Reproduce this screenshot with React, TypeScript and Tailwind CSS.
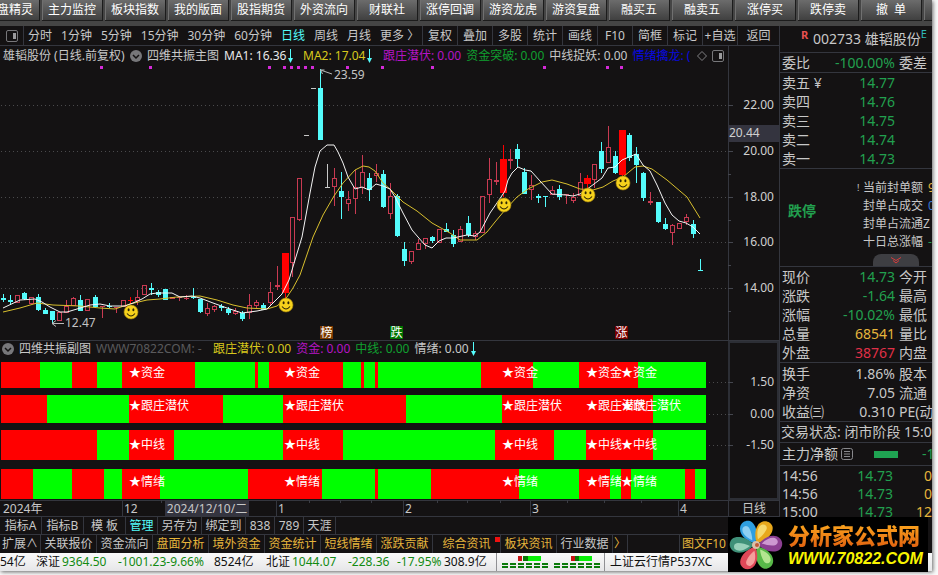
import React from "react";

type Kind = "u" | "d" | "s" | "g";
type Candle = [number, Kind, number, number, number, number];

// x, kind (u hollow up, d filled down, s signal, g grey), body top, body bottom, wick top, wick bottom
const candles: Candle[] = [
  [3, "d", 298, 300, 294, 302], [10, "d", 300, 302, 295, 304], [17, "u", 295, 303, 295, 303],
  [24, "d", 293, 299, 292, 300], [31, "u", 297, 304, 297, 304], [38, "d", 297, 310, 294, 311],
  [45, "d", 310, 314, 308, 314], [52, "d", 311, 320, 311, 323], [59, "u", 312, 321, 312, 321],
  [66, "u", 306, 313, 300, 313], [73, "u", 298, 306, 297, 306], [80, "d", 300, 311, 295, 311],
  [87, "u", 299, 311, 299, 311], [95, "d", 297, 307, 295, 308], [102, "u", 306, 307, 306, 318],
  [109, "d", 306, 307, 303, 308], [116, "u", 307, 308, 307, 313], [123, "u", 300, 307, 300, 307],
  [130, "s", 300, 301, 297, 304], [137, "u", 297, 301, 290, 305], [144, "u", 285, 295, 285, 295],
  [151, "d", 288, 290, 283, 295], [158, "d", 292, 295, 290, 297], [165, "d", 289, 300, 289, 300],
  [172, "u", 297, 299, 297, 299], [179, "u", 297, 298, 297, 301], [186, "u", 298, 299, 295, 300],
  [193, "d", 297, 298, 288, 299], [200, "d", 299, 312, 299, 313], [207, "u", 308, 314, 303, 316],
  [214, "u", 306, 310, 305, 312], [221, "d", 306, 308, 304, 311], [228, "d", 309, 313, 307, 315],
  [235, "u", 311, 314, 308, 315], [242, "d", 313, 319, 311, 321], [249, "u", 305, 313, 294, 319],
  [256, "u", 302, 306, 300, 308], [263, "d", 305, 310, 303, 310], [270, "u", 292, 303, 282, 305],
  [277, "u", 285, 287, 266, 290], [285, "s", 253, 293, 253, 300], [292, "u", 217, 263, 217, 277],
  [299, "u", 178, 220, 178, 221], [306, "g", 135, 136, 135, 136], [313, "g", 88, 89, 88, 89],
  [320, "d", 88, 140, 69, 140], [327, "g", 187, 188, 164, 188], [334, "u", 178, 187, 168, 206],
  [341, "d", 191, 197, 172, 219], [348, "u", 199, 204, 191, 211], [355, "u", 187, 199, 170, 214],
  [362, "u", 172, 188, 155, 194], [369, "d", 178, 190, 173, 201], [376, "u", 173, 176, 164, 182],
  [383, "d", 174, 207, 170, 208], [390, "u", 196, 214, 183, 219], [397, "d", 196, 236, 194, 237],
  [404, "d", 249, 261, 242, 266], [411, "u", 251, 262, 251, 264], [418, "u", 243, 250, 239, 250],
  [425, "u", 238, 244, 238, 249], [432, "d", 237, 241, 236, 243], [439, "u", 229, 243, 229, 243],
  [446, "d", 229, 232, 223, 232], [453, "d", 235, 244, 230, 247], [460, "u", 229, 242, 226, 242],
  [468, "d", 223, 235, 216, 237], [475, "u", 233, 237, 231, 240], [482, "u", 196, 233, 196, 233],
  [489, "u", 179, 195, 158, 203], [496, "u", 180, 182, 162, 185], [503, "s", 159, 193, 145, 197],
  [510, "u", 159, 161, 149, 169], [517, "d", 149, 159, 144, 168], [524, "d", 172, 194, 168, 194],
  [531, "u", 185, 190, 175, 200], [538, "d", 196, 198, 194, 203], [545, "d", 196, 197, 196, 207],
  [552, "u", 190, 195, 186, 195], [559, "d", 189, 197, 185, 200], [566, "u", 194, 195, 194, 204],
  [573, "u", 197, 201, 193, 203], [580, "u", 182, 196, 173, 196], [587, "s", 178, 184, 175, 188],
  [594, "u", 164, 180, 164, 188], [601, "d", 151, 169, 142, 173], [608, "u", 147, 163, 126, 163],
  [615, "d", 156, 173, 151, 174], [622, "s", 130, 175, 130, 177], [629, "d", 135, 158, 133, 161],
  [636, "d", 154, 165, 147, 183], [643, "d", 173, 198, 172, 201], [650, "u", 201, 203, 192, 205],
  [658, "d", 202, 222, 202, 223], [665, "d", 224, 229, 218, 230], [672, "u", 225, 233, 224, 245],
  [679, "u", 223, 229, 223, 229], [686, "u", 217, 222, 214, 225], [693, "d", 224, 234, 220, 238],
  [700, "d", 270, 271, 259, 271],
];

const maWhite =
  "3,308 20,300 35,299 42,302 50,307 60,312 67,312 77,309 90,305 100,304 110,306 125,306 133,303 142,299 150,294 157,293 172,293 180,297 192,296 200,298 213,303 227,308 242,313 257,311 267,309 273,303 282,294 289,280 295,260 302,237 310,193 315,167 320,151 327,145 334,145 338,152 343,163 348,177 355,189 362,187 369,190 376,184 383,186 390,189 395,197 403,213 412,230 418,237 425,245 432,248 439,241 446,238 453,238 467,235 475,236 480,232 490,213 499,200 505,191 508,180 512,173 518,167 525,170 531,171 540,181 552,194 566,195 573,196 580,194 590,187 602,178 608,168 615,167 622,160 629,157 636,154 643,165 650,171 657,185 665,203 672,215 679,221 686,223 693,227 700,234";
const maYellow =
  "3,312 20,308 37,303 53,305 80,306 100,308 115,309 130,304 147,300 160,299 177,297 200,296 217,300 233,305 247,308 267,309 277,306 287,297 293,288 300,275 313,237 323,215 334,196 343,183 355,170 363,166 369,167 375,171 383,183 390,189 403,202 417,211 432,223 450,233 460,240 477,240 487,232 495,222 505,210 517,197 528,189 542,182 552,180 567,184 580,189 593,190 603,187 613,181 623,177 635,167 643,166 652,169 667,180 687,197 700,218";

const dots = [101, 150, 269, 284, 291, 298, 305, 312, 347, 382, 432, 544, 607, 621];
const smileys = [[131, 312], [286, 305], [504, 205], [588, 195], [623, 183]];
const badges = [
  { x: 320, t: "榜", c: "#7c3a00" },
  { x: 390, t: "跌", c: "#007400" },
  { x: 615, t: "涨", c: "#780000" },
];
const gridY = [105, 151, 197, 242, 288];

function PriceChart() {
  return (
    <svg viewBox="0 66 728 274" className="block h-auto w-full" role="img" aria-label="K线图">
      {gridY.map((y) => (
        <line key={y} x1="1" x2="728" y1={y + 0.5} y2={y + 0.5} stroke="#4a4a4c" strokeDasharray="1 3" />
      ))}
      {dots.map((x) => <rect key={x} x={x - 1} y="66" width="3" height="3" fill="#d42ad8" />)}
      {candles.map(([x, k, t, b, wt, wb]) => {
        const color = k === "u" ? "#c93a52" : k === "d" ? "#54fcfc" : k === "s" ? "#ff0000" : "#c8c8c8";
        const small = b - t < 3;
        if (k === "u" && !small) {
          return (
            <g key={x} fill="none" stroke={color}>
              <path d={`M${x + 0.5} ${wt}V${t}M${x + 0.5} ${b}V${wb}`} />
              <rect x={x - 1.5} y={t + 0.5} width="4" height={b - t - 1} />
            </g>
          );
        }
        const half = k === "s" && !small ? 3 : 2;
        return (
          <g key={x} fill={color}>
            <rect x={x} y={wt} width="1" height={wb - wt} />
            <rect x={x - half} y={t} width={half * 2 + 1} height={b - t} />
          </g>
        );
      })}
      <polyline points={maYellow} fill="none" stroke="#d8bf2e" />
      <polyline points={maWhite} fill="none" stroke="#f4f4f4" />
      <path d="M320.500 70L332 74M320.500 70h4M320.500 70l2 4M52 323.500H64M52 323.500l4-3M52 323.500l4 3" fill="none" stroke="#b8b8b8" />
      <g fill="#c4c4c4" fontSize="12">
        <text x="334" y="79">23.59</text>
        <text x="65" y="327">12.47</text>
      </g>
      {smileys.map(([x, y]) => (
        <g key={x}>
          <circle cx={x} cy={y} r="7" fill="#f6d21c" stroke="#a8860c" strokeWidth="0.6" />
          <ellipse cx={x - 2.4} cy={y - 2.2} rx="1" ry="1.500" fill="#2c2404" />
          <ellipse cx={x + 2.4} cy={y - 2.2} rx="1" ry="1.500" fill="#2c2404" />
          <path d={`M${x - 4} ${y + 1.5}Q${x} ${y + 6.5} ${x + 4} ${y + 1.5}`} fill="none" stroke="#2c2404" strokeWidth="1.100" />
        </g>
      ))}
      {badges.map((b) => (
        <g key={b.x}>
          <rect x={b.x} y="326" width="13" height="13" fill={b.c} />
          <text x={b.x + 0.5} y="337" fontSize="12" fill="#fff">{b.t}</text>
        </g>
      ))}
    </svg>
  );
}

// Each band alternates red and green between its stops, starting with red at x = 1.
const bands = [
  { y: 362, h: 26, label: "★资金", ty: 377, stops: [1, 40, 72, 97, 122, 195, 255, 258, 269, 343, 361, 364, 375, 378, 481, 533, 579, 638, 706] },
  { y: 395, h: 28, label: "★跟庄潜伏", ty: 410, stops: [1, 47, 129, 223, 283, 406, 502, 653, 706] },
  { y: 430, h: 30, label: "★中线", ty: 449, stops: [1, 97, 129, 174, 283, 343, 495, 554, 586, 653, 706] },
  { y: 469, h: 30, label: "★情绪", ty: 486, stops: [1, 33, 72, 104, 122, 160, 248, 322, 375, 378, 431, 519, 579, 610, 621, 631, 685, 695, 706] },
];
// The fourth row runs green-red-green from 322 to 431.
const colorAt = (i: number) => (i % 2 === 0 ? "#ff0000" : "#00ff00");

function BandChart() {
  return (
    <svg viewBox="0 357 728 143" className="block h-auto w-full overflow-visible" role="img" aria-label="四维共振副图">
      {[382, 414, 445].map((y) => (
        <line key={y} x1="1" x2="728" y1={y + 0.5} y2={y + 0.5} stroke="#4a4a4c" strokeDasharray="1 3" />
      ))}
      {bands.map((b) => (
        <g key={b.y}>
          {b.stops.slice(0, -1).map((x, i) => (
            <rect key={x} x={x} y={b.y} width={b.stops[i + 1] - x} height={b.h} fill={colorAt(i)} />
          ))}
          {[129, 284, 502, 586, 621].map((x) => (
            <text key={x} x={x} y={b.ty} fontSize="12" fill="#fff">{b.label}</text>
          ))}
        </g>
      ))}
      {[161, 309, 340, 371, 437, 467, 500, 567, 604, 641].map((x) => (
        <rect key={x} x={x} y="500" width="1" height="3" fill="#3a3c44" />
      ))}
    </svg>
  );
}

function PriceAxis() {
  const labels = ["22.00", "20.00", "18.00", "16.00", "14.00"];
  return (
    <svg viewBox="0 46 51 294" className="block h-auto w-full" role="img" aria-label="价格轴">
      {gridY.map((y, i) => (
        <g key={y}>
          <rect x="0" y={y} width="5" height="1" fill="#44464e" />
          <rect x="0" y={y + 23} width="3" height="1" fill="#44464e" />
          <text x="46" y={y + 4} textAnchor="end" fontSize="12" fill="#d0d0d0">{labels[i]}</text>
        </g>
      ))}
      <rect x="0" y="125" width="51" height="17" fill="#34343f" />
      <text x="1" y="137" fontSize="12" fill="#d0d0d0">20.44</text>
    </svg>
  );
}

function BandAxis() {
  return (
    <svg viewBox="0 341 51 159" className="block h-auto w-full" role="img" aria-label="副图轴">
      <rect x="1" y="342" width="49" height="157" fill="none" stroke="#2c2e35" strokeWidth="2" />
      {[["1.50", 382], ["0.00", 414], ["-1.50", 445]].map(([t, y]) => (
        <g key={t}>
          <rect x="0" y={y} width="5" height="1" fill="#44464e" />
          <text x="46" y={Number(y) + 4} textAnchor="end" fontSize="12" fill="#d0d0d0">{t}</text>
        </g>
      ))}
    </svg>
  );
}

function PanelIcon() {
  return (
    <svg width="12" height="12" viewBox="0 0 12 12" className="shrink-0" aria-hidden="true">
      <rect x="0.500" y="0.500" width="11" height="11" rx="1.500" fill="none" stroke="#77777a" />
      <rect x="7" y="3" width="3" height="6" fill="#9a9a9c" />
    </svg>
  );
}

function Chevron() {
  return (
    <svg width="12" height="12" viewBox="0 0 12 12" className="shrink-0" aria-hidden="true">
      <circle cx="6" cy="6" r="6" fill="#77777a" />
      <path d="M3 5l3 3 3-3" fill="none" stroke="#141213" strokeWidth="1.500" />
    </svg>
  );
}

function DownArrow() {
  return (
    <svg width="5" height="14" viewBox="0 0 5 14" className="ml-[2px] shrink-0" aria-hidden="true">
      <path d="M2.500 0V13" stroke="#54fcfc" />
      <path d="M0 9h5L2.500 14z" fill="#54fcfc" />
    </svg>
  );
}

const toolbar = ["操盘精灵", "主力监控", "板块指数", "我的版面", "股指期货", "外资流向", "财联社", "涨停回调", "游资龙虎", "游资复盘", "融买五", "融卖五", "涨停买", "跌停卖", "撤  单", ""];
const periods = ["分时", "1分钟", "5分钟", "15分钟", "30分钟", "60分钟", "日线", "周线", "月线", "更多 〉"];
const tools = ["复权", "叠加", "多股", "统计", "画线", "F10", "简框", "标记", "+自选"];

const tabs = [
  { t: "指标A", w: "w-[42px]" }, { t: "指标B", w: "w-[42px]" }, { t: "模 板", w: "w-[42px]" },
  { t: "管理", w: "w-[32px]" }, { t: "另存为", w: "w-[44px]" }, { t: "绑定到", w: "w-[44px]" },
  { t: "838", w: "w-[29px]" }, { t: "789", w: "w-[29px]" }, { t: "天涯", w: "w-[32px]" },
];
const links = [
  { t: "扩展∧", c: "text-[#c8c8c8]", w: "w-[41px]" },
  { t: "关联报价", c: "text-[#c8c8c8]", w: "w-[56px]" },
  { t: "资金流向", c: "text-[#c8c8c8]", w: "w-[56px]" },
  { t: "盘面分析", c: "text-[#e6b53c]", w: "w-[56px]" },
  { t: "境外资金", c: "text-[#e6b53c]", w: "w-[56px]" },
  { t: "资金统计", c: "text-[#e6b53c]", w: "w-[56px]" },
  { t: "短线情绪", c: "text-[#e6b53c]", w: "w-[56px]" },
  { t: "涨跌贡献", c: "text-[#e6b53c]", w: "w-[56px]" },
  { t: "综合资讯", c: "text-[#e6b53c]", w: "w-[68px]" },
  { t: "板块资讯", c: "text-[#e6b53c]", w: "w-[56px]" },
  { t: "行业数据", c: "text-[#c8c8c8]", w: "w-[56px]" },
  { t: "〉", c: "text-[#e6b53c]", w: "w-[15px]" },
];

const green = "text-[#22a04f]";
const light = "text-[#c8c8c8]";

function Quotes({ rows }: { rows: string[][] }) {
  return (
    <table className="w-full table-fixed border-b border-[#34363e] text-[14px]">
      <tbody>
        {rows.map(([a, b, c, color]) => (
          <tr key={a} className="h-[19px] leading-[19px] whitespace-nowrap">
            <td className="w-[45px] p-0 pl-[2px]">{a}</td>
            <td className={`w-[70px] p-0 text-right ${color}`}>{b}</td>
            <td className="p-0 pl-[4px]">{c}</td>
          </tr>
        ))}
      </tbody>
    </table>
  );
}

function SidePanel() {
  return (
    <aside className="w-[153px] shrink-0 overflow-hidden border-l border-[#34363e] text-[#c8c8c8]">
      <div className="flex h-[27px] items-center border-b border-[#34363e] pl-[21px] whitespace-nowrap">
        <span className="w-[12px] self-start pt-[2px] text-[11px] leading-[14px] font-bold text-[#e85050]">R</span>
        <h1 className="text-[14px] leading-[20px]">002733 雄韬股份</h1>
        <span className="self-start pt-px text-[11px] leading-[14px] text-[#30b8b8]">E</span>
      </div>
      <Quotes rows={[["委比", "-100.00%", "委差", green]]} />
      <Quotes rows={[["卖五 ¥", "14.77", "", green], ["卖四", "14.76", "", green], ["卖三", "14.75", "", green], ["卖二", "14.74", "", green], ["卖一", "14.73", "", green]]} />
      <div className="flex h-[98px] flex-col border-b border-[#34363e]">
        <div className="flex items-start pt-[10px]">
          <strong className="w-[74px] shrink-0 pt-[20px] pl-[8px] text-[14px] leading-[24px] text-[#22a04f]">跌停</strong>
          <ul className="text-[12px] leading-[18px] whitespace-nowrap">
            <li className="flex"><span className="w-[9px] pl-[3px] text-[9px]">!</span><span className="w-[65px]">当前封单额</span><span className="text-[#e6b53c]">9</span></li>
            <li className="flex pl-[9px]"><span className="w-[65px]">封单占成交</span><span className="text-[#3a78d8]">0</span></li>
            <li className="pl-[9px]">封单占流通Z</li>
            <li className="flex pl-[9px]"><span className="w-[65px]">十日总涨幅</span><span className="text-[#22a04f]">-</span></li>
          </ul>
        </div>
        <button type="button" aria-label="展开" className="mt-auto ml-[93px] flex h-[12px] w-[46px] items-center justify-center rounded-t-lg bg-[#3e3e42]">
          <svg width="12" height="8" viewBox="0 0 12 8" aria-hidden="true">
            <path d="M1 1.500l5 3 5-3M3 4.500l3 2.500 3-2.500" fill="none" stroke="#d83c3c" />
          </svg>
        </button>
      </div>
      <Quotes
        rows={[
          ["现价", "14.73", "今开", green], ["涨跌", "-1.64", "最高", green], ["涨幅", "-10.02%", "最低", green],
          ["总量", "68541", "量比", "text-[#e6b53c]"], ["外盘", "38767", "内盘", "text-[#e03048]"],
        ]}
      />
      <div className="border-b border-[#34363e] pt-px [&>table]:border-b-0">
        <Quotes rows={[["换手", "1.86%", "股本", light], ["净资", "7.05", "流通", light], ["收益㈢", "0.310", "PE(动", light]]} />
      </div>
      <p className="h-[21px] border-b border-[#34363e] pl-px text-[14px] leading-[20px] whitespace-nowrap">交易状态: 闭市阶段 15:00</p>
      <div className="flex h-[23px] items-center border-b border-[#34363e] pl-[2px] text-[14px] whitespace-nowrap">
        <span>主力净额</span>
        <svg width="12" height="12" viewBox="0 0 12 12" className="ml-[3px] shrink-0" aria-hidden="true">
          <rect x="0.500" y="0.500" width="11" height="11" rx="2" fill="none" stroke="#88888c" />
          <path d="M3 3.500h6M3 6h6M3 8.500h6" stroke="#88888c" />
        </svg>
        <span className="ml-[21px] h-[7px] w-[24px] shrink-0 bg-[#1fa352]" />
        <span className={`ml-[24px] ${green}`}>-1</span>
      </div>
      <table className="mt-px w-full table-fixed text-[14px]">
        <tbody>
          {[["14:56", "0"], ["14:56", "0"], ["15:00", "12"]].map(([t, n], i) => (
            <tr key={i} className="h-[18px] leading-[18px]">
              <td className="w-[45px] p-0 pl-[2px]">{t}</td>
              <td className="w-[68px] p-0 text-right text-[#22a04f]">14.73</td>
              <td className="p-0 text-right text-[#e6b53c]">{n}</td>
            </tr>
          ))}
        </tbody>
      </table>
    </aside>
  );
}

function MiniBars() {
  const rows = [0, 1, 2, 3, 4, 5];
  return (
    <svg width="98" height="13" viewBox="0 0 98 13" aria-hidden="true">
      {[0, 52].map((o, j) => (
        <g key={o}>
          <rect x={o + 16 + j} y="0" width="4" height="5" fill="#c81414" />
          <rect x={o + 21} y="0" width="5" height="5" fill="#087808" />
          <rect x={o + 26 - j} y="0" width="13" height="5" fill="#08f008" />
          {rows.map((i) => (
            <g key={i} fill="#0a7a0a">
              <rect x={o + i * 8} y="7" width="6" height="2" />
              <rect x={o + i * 8} y="10" width="6" height="2" />
            </g>
          ))}
        </g>
      ))}
    </svg>
  );
}

function Flower() {
  const petals = [
    ["#2f9fe0", "#9fd8f6", -28], ["#e8a81c", "#f8e27c", 28], ["#8c3f92", "#d8a8dc", 85],
    ["#58b848", "#c4ec9c", 148], ["#e04858", "#f8b0a8", 205], ["#3f9078", "#a8dcc4", 270],
  ] as const;
  return (
    <svg width="56" height="54" viewBox="0 0 56 54" className="shrink-0" aria-hidden="true">
      {petals.map(([c, l, a]) => (
        <g key={a} transform={`rotate(${a} 28 27)`}>
          <path d="M28 25C20 18 18 8 23 3c3-3 8-3 11 0c4 5 2 15-6 22z" fill={c} />
          <path d="M27 21C22 15 21 9 24 6c2-2 6-1 6 3c0 4-1 8-3 12z" fill={l} opacity="0.850" />
        </g>
      ))}
      <circle cx="28" cy="27" r="4" fill="#d8c0a8" />
      <circle cx="29" cy="27" r="2" fill="#c05838" />
    </svg>
  );
}

const up = "text-[#128a12]";

export default function App() {
  return (
    <div className="bg-[#fafafa] pr-[6px] pb-[4px] font-['Noto_Sans','Noto_Sans_CJK_SC',sans-serif] text-[12px] leading-[16px]">
      <div className="relative bg-[#141213] text-[#c8c8c8] shadow-[1px_1px_4px_rgba(0,0,0,0.6)]">
        <nav className="flex h-[26px] items-start gap-[2px] overflow-hidden bg-[#454545]">
          {toolbar.map((t, i) => (
            <button
              key={i}
              type="button"
              className="h-[21px] w-[61px] shrink-0 border-r border-b border-[#1c1c1c] bg-linear-to-b from-[#6c6c6c] to-[#404040] whitespace-pre text-white shadow-[inset_1px_0_0_#707070] first:-ml-[21px]"
            >
              {t}
            </button>
          ))}
        </nav>
        <div className="flex">
          <main className="min-w-0 flex-1">
            <div className="flex h-[20px] items-stretch overflow-hidden border-b border-[#34363e] whitespace-nowrap">
              <button type="button" aria-label="侧栏" className="flex w-[24px] shrink-0 items-center justify-center border-r border-[#34363e]"><PanelIcon /></button>
              <div className="flex min-w-0 flex-1 gap-[9px] pl-[4px]">
                {periods.map((p) => (
                  <button key={p} type="button" className={p === "日线" ? "shrink-0 text-[#54fcfc]" : "shrink-0"}>{p}</button>
                ))}
              </div>
              {tools.map((t) => (
                <button key={t} type="button" className="w-[35px] shrink-0 border-l border-[#34363e]">{t}</button>
              ))}
              <button type="button" className="w-[42px] shrink-0 border-l border-[#34363e]">返回</button>
            </div>
            <div className="flex">
              <div className="min-w-0 flex-1 border-b border-[#34363e]">
                <div className="flex h-[20px] items-center gap-[5px] overflow-hidden pl-[3px] whitespace-nowrap">
                  <h2 className="w-[122px] shrink-0">雄韬股份 (日线.前复权)</h2>
                  <Chevron />
                  <span className="shrink-0">四维共振主图</span>
                  <span className="flex w-[74px] shrink-0 items-center text-[#e8e8e8]">MA1: 16.36<DownArrow /></span>
                  <span className="flex w-[75px] shrink-0 items-center text-[#d8c81c]">MA2: 17.04<DownArrow /></span>
                  <span className="shrink-0 text-[#b414c4]">跟庄潜伏: 0.00</span>
                  <span className="shrink-0 text-[#10a030]">资金突破: 0.00</span>
                  <span className="shrink-0">中线捉妖: 0.00</span>
                  <span className="w-[60px] shrink-0 text-[#0808e0]">情绪擒龙: (</span>
                  <svg width="10" height="10" viewBox="0 0 10 10" className="shrink-0" aria-hidden="true">
                    <path d="M5 0.500L9.500 5 5 9.500 0.500 5z" fill="none" stroke="#808084" />
                  </svg>
                  <PanelIcon />
                </div>
                <PriceChart />
              </div>
              <div className="w-[51px] shrink-0 border-b border-[#34363e] shadow-[inset_1px_0_0_#34363e]"><PriceAxis /></div>
            </div>
            <div className="flex">
              <div className="min-w-0 flex-1">
                <div className="flex h-[16px] items-center gap-[5px] overflow-hidden pl-[2px] whitespace-nowrap">
                  <Chevron />
                  <h2>四维共振副图</h2>
                  <span className="w-[112px] shrink-0 text-[#5a5a5c]">WWW70822COM: -</span>
                  <span className="text-[#d8c81c]">跟庄潜伏: 0.00</span>
                  <span className="text-[#b414c4]">资金: 0.00</span>
                  <span className="text-[#10a030]">中线: 0.00</span>
                  <span className="flex items-center">情绪: 0.00<DownArrow /></span>
                </div>
                <BandChart />
              </div>
              <div className="w-[51px] shrink-0"><BandAxis /></div>
            </div>
            <div className="flex h-[17px] border-y border-[#34363e] leading-[15px] whitespace-nowrap">
              <span className="w-[122px] pl-[3px]">2024年</span>
              <span className="relative w-[154px] border-l border-[#34363e] pl-px">
                12
                <span className="absolute top-0 left-[42px] w-[84px] bg-[#34343f] text-center">2024/12/10/二</span>
              </span>
              <span className="w-[127px] border-l border-[#34363e] pl-px">1</span>
              <span className="w-[127px] border-l border-[#34363e] pl-px">2</span>
              <span className="w-[148px] border-l border-[#34363e] pl-px">3</span>
              <span className="flex-1 border-l border-[#34363e] pl-px">4</span>
              <span className="w-[51px] border-l border-[#34363e] text-center">日线</span>
            </div>
            <div className="flex h-[18px] border-b border-[#34363e] leading-[17px] whitespace-nowrap">
              {tabs.map(({ t, w }) => (
                <button key={t} type="button" className={`${w} shrink-0 border-r border-[#34363e] ${t === "管理" ? "text-[#54fcfc]" : ""}`}>{t}</button>
              ))}
            </div>
            <div className="flex h-[18px] leading-[18px] whitespace-nowrap">
              {links.map(({ t, c, w }) => (
                <button key={t} type="button" className={`${w} ${c} relative shrink-0 border-r border-[#34363e]`}>
                  {t}
                  {t === "综合资讯" && <span className="absolute top-[2px] right-0 size-[5px] bg-[#f01010]" />}
                </button>
              ))}
              <button type="button" className="mr-[51px] ml-auto w-[49px] shrink-0 border-l border-[#34363e] text-[#e6b53c]">图文F10</button>
            </div>
          </main>
          <SidePanel />
        </div>
        <footer className="flex h-[18px] items-center overflow-hidden bg-linear-to-b from-[#fafafa] to-[#e6e6e8] whitespace-nowrap text-[#101010]">
          <span className="w-[36px] shrink-0">54亿</span>
          <span className="w-[26px] shrink-0">深证</span>
          <span className={`w-[56px] shrink-0 ${up}`}>9364.50</span>
          <span className={`w-[96px] shrink-0 ${up}`}>-1001.23-9.66%</span>
          <span className="w-[52px] shrink-0">8524亿</span>
          <span className="w-[26px] shrink-0">北证</span>
          <span className={`w-[56px] shrink-0 ${up}`}>1044.07</span>
          <span className={`w-[49px] shrink-0 ${up}`}>-228.36</span>
          <span className={`w-[47px] shrink-0 ${up}`}>-17.95%</span>
          <span className="w-[52px] shrink-0">308.9亿</span>
          <span className="flex h-full w-[109px] shrink-0 items-center justify-center border-x border-[#909094]"><MiniBars /></span>
          <span className="pl-[5px]">上证云行情P537XC</span>
        </footer>
        <div className="absolute right-[4px] -bottom-px flex h-[55px] w-[200px] items-center bg-black">
          <Flower />
          <div className="pl-[4px] whitespace-nowrap">
            <p className="bg-linear-to-b from-[#ffb020] to-[#e06010] bg-clip-text font-['Noto_Sans_CJK_SC',sans-serif] text-[22px] leading-[28px] font-black text-transparent">分析家公式网</p>
            <a href="#" className="block font-['Liberation_Sans',sans-serif] text-[16px] leading-[22px] font-bold text-[#f8f400] italic">WWW.70822.COM</a>
          </div>
        </div>
      </div>
    </div>
  );
}
